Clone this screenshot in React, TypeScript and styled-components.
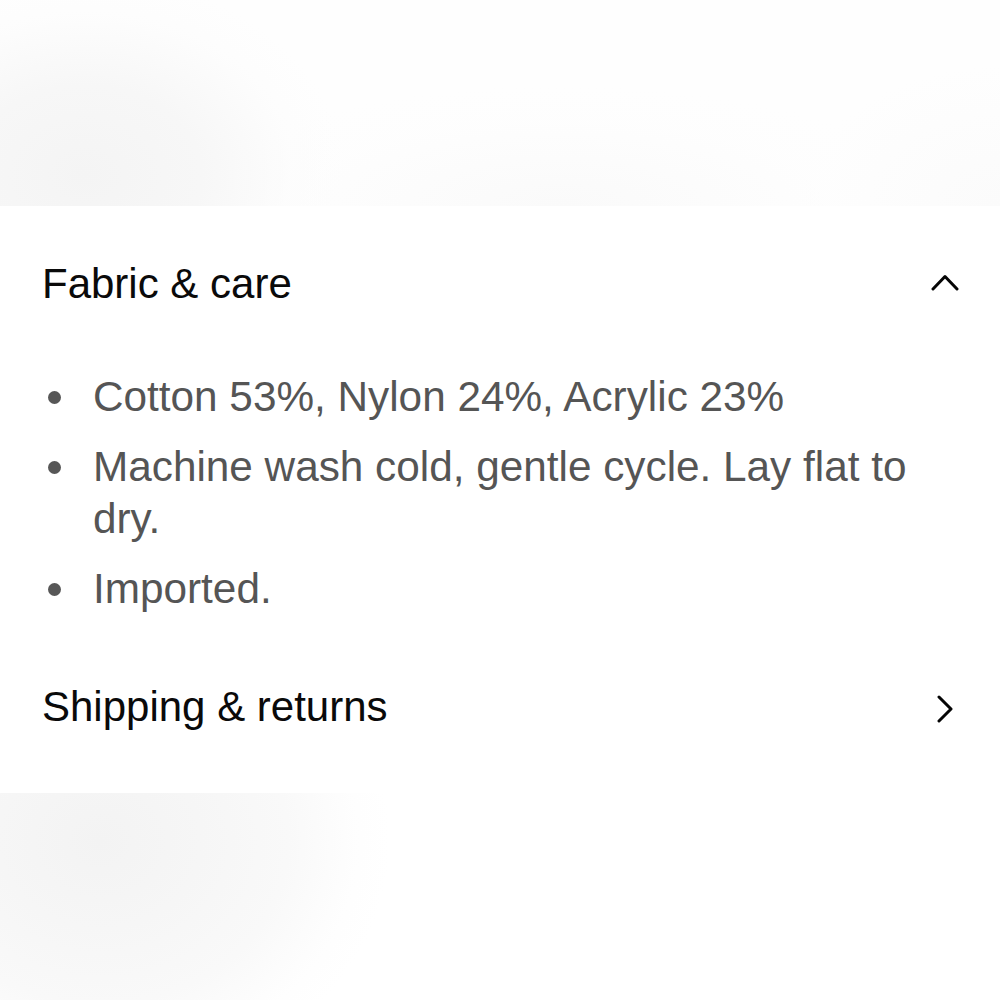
import React from "react";
import styled, { createGlobalStyle } from "styled-components";

const Global = createGlobalStyle`
  html, body { margin: 0; padding: 0; background: #ffffff; }
  body { font-family: "Liberation Sans", Arial, sans-serif; -webkit-font-smoothing: antialiased; }
`;

const Page = styled.div`
  width: 1000px;
  min-height: 1000px;
  display: flex;
  flex-direction: column;
  background: #ffffff;
`;

const TopBand = styled.div`
  height: 206px;
  background:
    radial-gradient(ellipse 260px 200px at 85px 175px, #f4f4f4 0%, #f7f7f7 45%, rgba(252,252,252,0.6) 80%, rgba(255,255,255,0) 100%),
    radial-gradient(ellipse 380px 120px at 560px 206px, #fafafa 0%, rgba(253,253,253,0.5) 70%, rgba(255,255,255,0) 100%),
    radial-gradient(ellipse 200px 140px at 1000px 206px, #fbfbfb 0%, rgba(255,255,255,0) 100%),
    #fefefe;
`;

const BottomBand = styled.div`
  flex: 1;
  background:
    radial-gradient(ellipse 290px 250px at 100px 48px, #f3f3f3 0%, #f6f6f6 35%, #f9f9f9 65%, rgba(253,253,253,0.6) 88%, rgba(255,255,255,0) 100%),
    #ffffff;
`;

const Panel = styled.section`
  background: #ffffff;
  padding: 52px 40px 60px 42px;
  display: flex;
  flex-direction: column;
`;

const Header = styled.div<{ $gap?: number }>`
  display: flex;
  align-items: center;
  justify-content: space-between;
  margin-top: ${(p) => p.$gap ?? 0}px;
`;

const Title = styled.h2`
  margin: 0;
  font-family: "Liberation Sans", Arial, sans-serif;
  font-weight: 400;
  font-size: 42px;
  line-height: 52px;
  color: #0a0a0a;
`;

const IconBox = styled.span<{ $dy?: number }>`
  width: 30px;
  height: 30px;
  display: flex;
  align-items: center;
  justify-content: center;
  margin-top: ${(p) => p.$dy ?? 0}px;
  color: #050505;
`;

const List = styled.ul`
  list-style: none;
  margin: 61px 0 0 0;
  padding: 0;
  display: flex;
  flex-direction: column;
  gap: 18px;
`;

const Item = styled.li`
  display: flex;
  align-items: flex-start;
`;

const BulletBox = styled.span`
  width: 51px;
  height: 52px;
  flex: none;
  display: flex;
  align-items: center;
  padding-left: 6px;
  box-sizing: border-box;
`;

const Dot = styled.span`
  width: 13px;
  height: 13px;
  flex: none;
  border-radius: 50%;
  background: #575757;
`;

const ItemText = styled.span`
  font-family: "Liberation Sans", Arial, sans-serif;
  font-size: 42.3px;
  line-height: 52px;
  color: #555555;
  max-width: 867px;
`;

const ChevronUp = () => (
  <svg width="28" height="17" viewBox="0 0 28 17" fill="none">
    <polyline points="2,15 14,2.5 26,15" stroke="currentColor" strokeWidth="3" strokeLinecap="round" strokeLinejoin="round" />
  </svg>
);

const ChevronRight = () => (
  <svg width="18" height="28" viewBox="0 0 18 28" fill="none">
    <polyline points="3,2 15,14 3,26" stroke="currentColor" strokeWidth="3" strokeLinecap="round" strokeLinejoin="round" />
  </svg>
);

const items = [
  "Cotton 53%, Nylon 24%, Acrylic 23%",
  "Machine wash cold, gentle cycle. Lay flat to dry.",
  "Imported.",
];

export default function App() {
  return (
    <>
      <Global />
      <Page>
        <TopBand />
        <Panel>
          <Header>
            <Title>Fabric &amp; care</Title>
            <IconBox $dy={-4}>
              <ChevronUp />
            </IconBox>
          </Header>
          <List>
            {items.map((t) => (
              <Item key={t}>
                <BulletBox>
                  <Dot />
                </BulletBox>
                <ItemText>{t}</ItemText>
              </Item>
            ))}
          </List>
          <Header $gap={66}>
            <Title>Shipping &amp; returns</Title>
            <IconBox $dy={4}>
              <ChevronRight />
            </IconBox>
          </Header>
        </Panel>
        <BottomBand />
      </Page>
    </>
  );
}
